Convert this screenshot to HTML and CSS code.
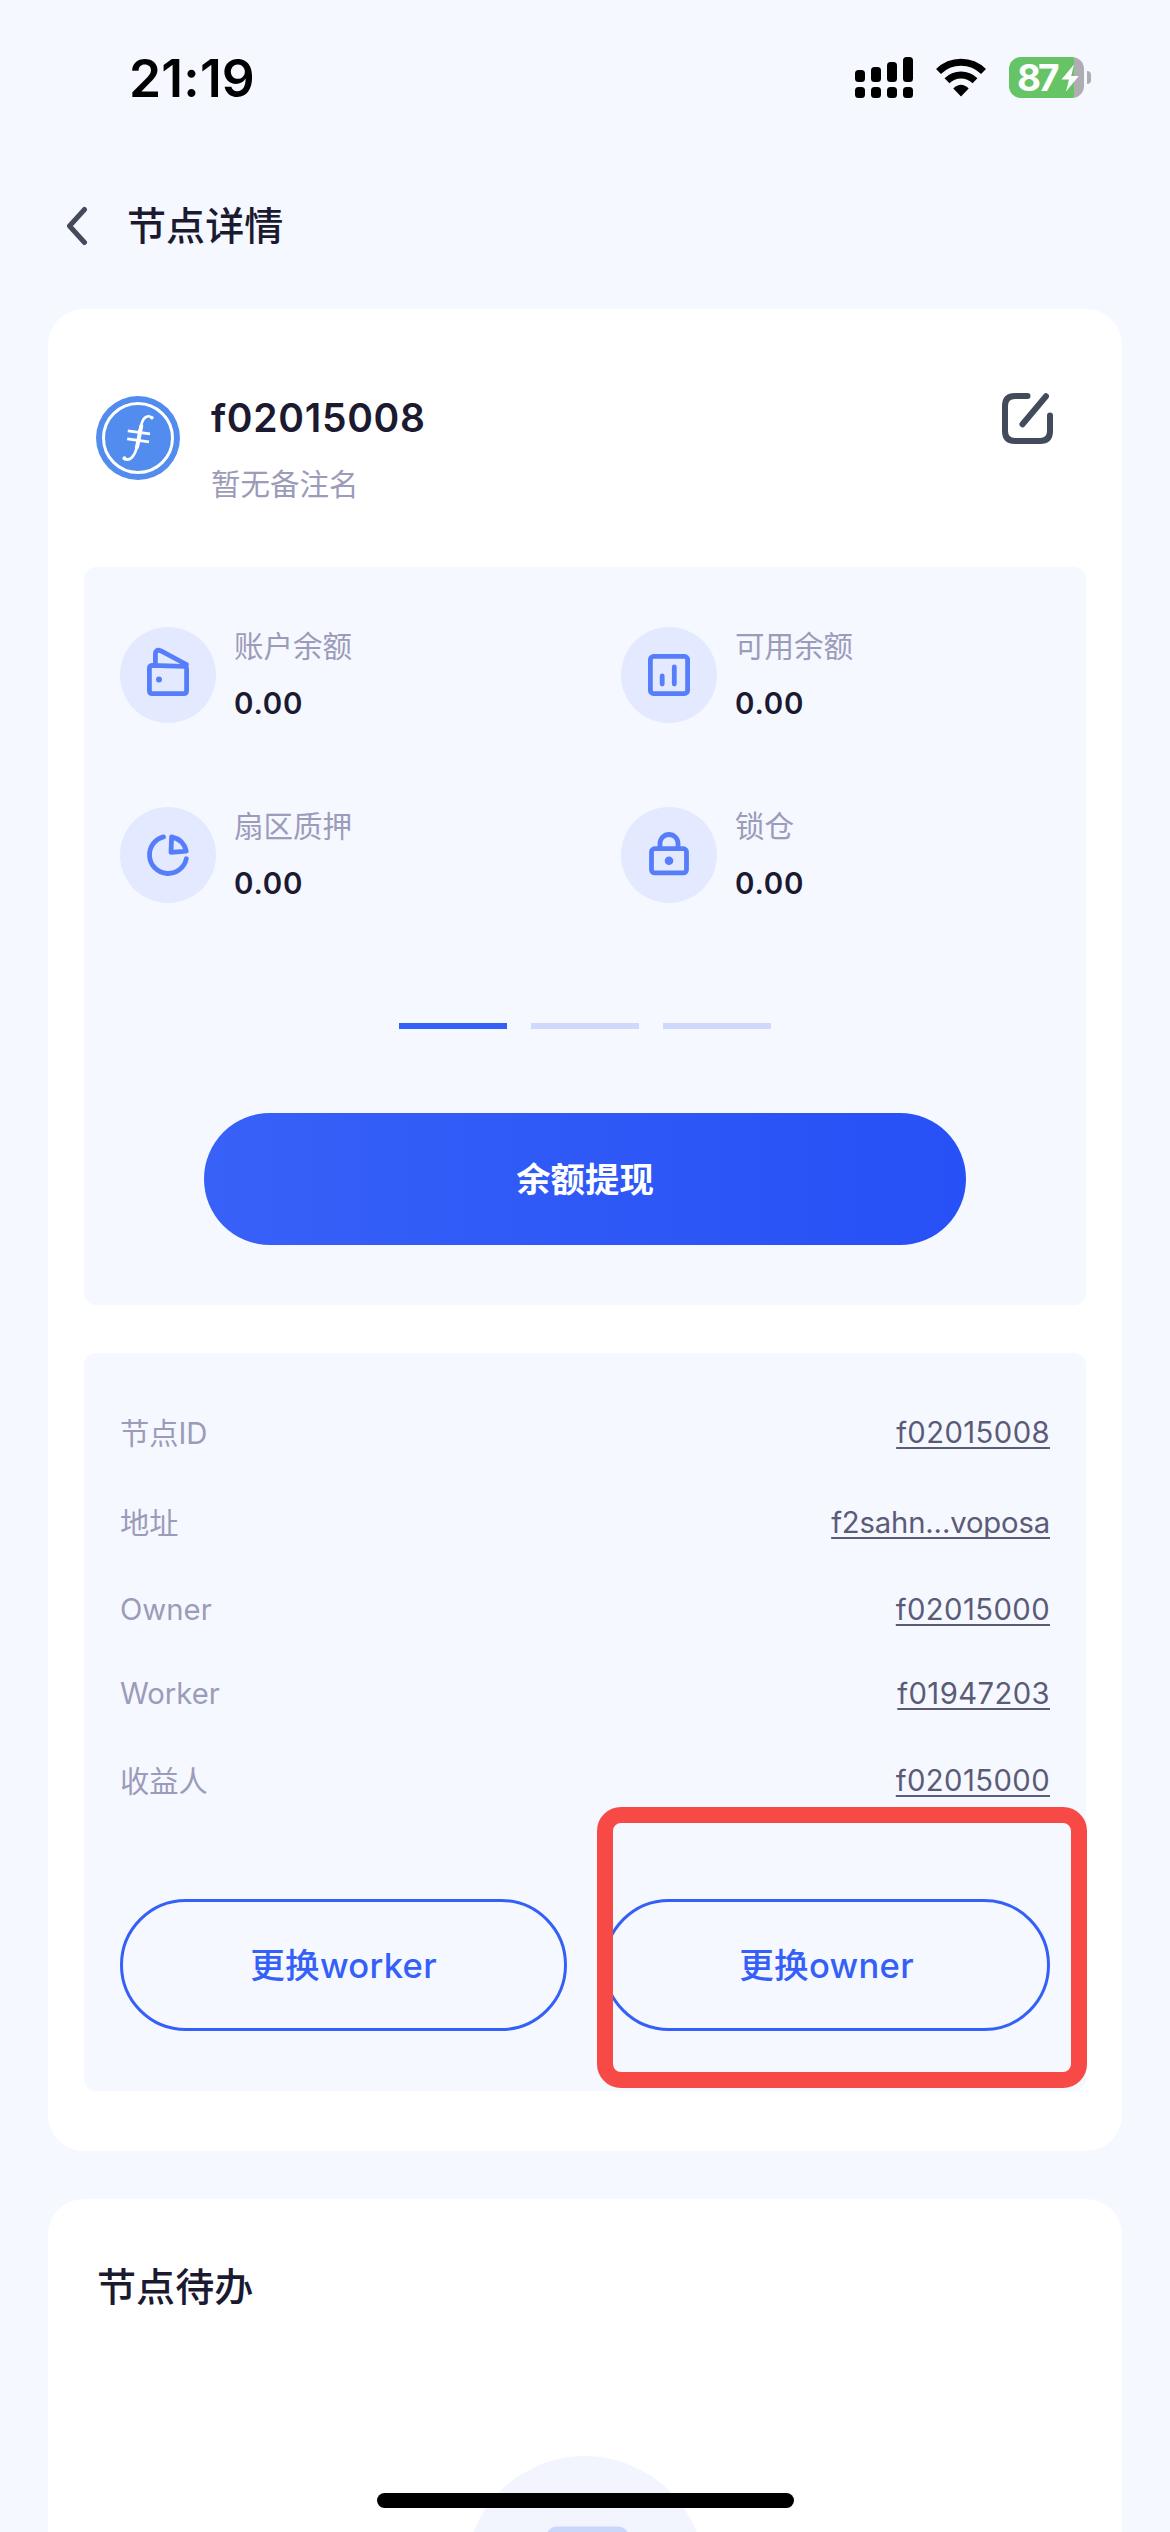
FILE: index.html
```html
<!DOCTYPE html>
<html lang="zh-CN">
<head>
<meta charset="utf-8">
<title>节点详情</title>
<link rel="stylesheet" href="styles.css">
</head>
<body>
<div class="screen">
  <header class="status">
    <span class="clock">21:19</span>
    <div class="status-icons">
      <svg class="signal" width="58" height="41" viewBox="0 0 58 41">
        <rect x="0" y="13" width="10" height="12" rx="3.5"/><rect x="16" y="10" width="10" height="15" rx="3.5"/><rect x="32" y="5" width="10" height="20" rx="3.5"/><rect x="48" y="0" width="10" height="25" rx="3.5"/>
        <rect x="0" y="30" width="10" height="11" rx="3.5"/><rect x="16" y="30" width="10" height="11" rx="3.5"/><rect x="32" y="30" width="10" height="11" rx="3.5"/><rect x="48" y="30" width="10" height="11" rx="3.5"/>
      </svg>
      <svg class="wifi" width="52" height="41" viewBox="0 0 52 41">
        <path d="M3.500 14.500A32 32 0 0 1 48.500 14.500" fill="none" stroke="#000" stroke-width="7"/>
        <path d="M12 23.800A20 20 0 0 1 40 23.800" fill="none" stroke="#000" stroke-width="7"/>
        <path d="M26 39.500L18.300 31.500Q26 24 33.700 31.500Z"/>
      </svg>
      <div class="battery">
        <div class="battery-body"><span>87</span>
          <svg width="18" height="28" viewBox="0 0 18 28"><path d="M13 0.500L0.500 15.500H8L5 27.500L17.800 12H10.200Z" fill="#fff"/></svg>
        </div>
        <div class="battery-tip"></div>
      </div>
    </div>
  </header>
  <nav class="nav">
    <svg width="24" height="40" viewBox="0 0 24 40"><path d="M19.500 3.500L4.500 20L19.500 36.500" fill="none" stroke="#434a5b" stroke-width="5" stroke-linecap="round" stroke-linejoin="round"/></svg>
    <h1>节点详情</h1>
  </nav>

  <main class="content">
    <section class="card node">
      <div class="profile">
        <svg class="coin" width="84" height="84" viewBox="0 0 84 84">
          <circle cx="42" cy="42" r="42" fill="#538cef"/>
          <circle cx="42" cy="42" r="34.500" fill="none" stroke="#fff" stroke-width="3"/>
          <g fill="none" stroke="#fff" stroke-linecap="round">
            <path d="M56 21.600C52 18.500 47.800 21 45.800 27C43 36 42.800 44 40.500 52.500C38.500 60 34 65.500 28.500 63" stroke-width="2.600"/>
            <path d="M45.300 30C43.300 38 42.800 45 40.800 51.500" stroke-width="4"/>
            <path d="M31.800 34.900L54 37.900M31.200 42.900L53 45.900" stroke-width="2.700" stroke-linecap="butt"/>
          </g>
          <circle cx="55.800" cy="21.800" r="1.800" fill="#fff"/><circle cx="28.500" cy="62.200" r="2" fill="#fff"/>
        </svg>
        <div class="names">
          <div class="node-name">f02015008</div>
          <div class="remark">暂无备注名</div>
        </div>
        <svg class="edit" width="52" height="52" viewBox="0 0 52 52"><path d="M25.500 3H13Q3 3 3 13V38Q3 48 13 48H38Q48 48 48 38V22.500M44 3.200L20.500 31.200" fill="none" stroke="#434a5b" stroke-width="6" stroke-linecap="round"/></svg>
      </div>

      <div class="panel balances">
        <div class="stats">
          <div class="stat">
            <svg class="badge" viewBox="0 0 96 96"><path d="M35.400 37V27Q35.400 22 40.500 23.700L66.500 37.500M32 38.400L64 39.400Q66.600 39.500 66.600 42V63.500Q66.600 66.600 63.500 66.600H32.500Q29.400 66.600 29.400 63.500V41.500Q29.400 38.400 32.500 38.400Z"/><circle class="dot" cx="39" cy="52.400" r="3"/></svg>
            <div class="figures"><span class="label">账户余额</span><span class="amount">0.00</span></div>
          </div>
          <div class="stat">
            <svg class="badge" viewBox="0 0 96 96"><rect x="29.400" y="29.400" width="37.200" height="37.200" rx="3.200"/><path d="M41.200 49V57M53.300 40V57"/></svg>
            <div class="figures"><span class="label">可用余额</span><span class="amount">0.00</span></div>
          </div>
          <div class="stat">
            <svg class="badge" viewBox="0 0 96 96"><path d="M43.500 29.900A18.600 18.600 0 1 0 66.300 51.800M51.600 29.900L51 45.300L66.300 44.200Q63.500 32.500 51.600 29.900Z"/></svg>
            <div class="figures"><span class="label">扇区质押</span><span class="amount">0.00</span></div>
          </div>
          <div class="stat">
            <svg class="badge" viewBox="0 0 96 96"><rect x="30.500" y="41.700" width="35" height="24.200" rx="3.200"/><path d="M39 41V36.500A9 9 0 0 1 57 36.500V41"/><circle class="dot" cx="48" cy="53.800" r="4.300"/></svg>
            <div class="figures"><span class="label">锁仓</span><span class="amount">0.00</span></div>
          </div>
        </div>
        <div class="pager"><i class="on"></i><i></i><i></i></div>
        <button class="withdraw">余额提现</button>
      </div>

      <div class="panel details">
        <dl>
          <div class="row"><dt>节点ID</dt><dd>f02015008</dd></div>
          <div class="row"><dt>地址</dt><dd class="address">f2sahn...voposa</dd></div>
          <div class="row latin"><dt>Owner</dt><dd>f02015000</dd></div>
          <div class="row latin"><dt>Worker</dt><dd>f01947203</dd></div>
          <div class="row"><dt>收益人</dt><dd>f02015000</dd></div>
        </dl>
        <div class="actions">
          <button class="outline">更换worker</button>
          <button class="outline">更换owner</button>
        </div>
        <div class="highlight"></div>
      </div>
    </section>

    <section class="card todo">
      <h2>节点待办</h2>
      <svg class="empty" width="240" height="240" viewBox="0 0 240 240"><circle cx="120" cy="120" r="120" fill="#f2f5fe"/><rect x="81.500" y="70.500" width="82" height="110" rx="10" fill="#cbd6fb"/></svg>
    </section>
  </main>
  <div class="home-bar"></div>
</div>
</body>
</html>
```
FILE: styles.css
```css
* { box-sizing: border-box; }
body { margin: 0; }
h1, h2, dl, dd { margin: 0; }
button { border: 0; padding: 0; font-family: inherit; }
svg { flex-shrink: 0; }

.screen {
  position: relative;
  width: 1170px;
  height: 2532px;
  overflow: hidden;
  background: #f5f8ff;
  color: #1b1a31;
  font-family: Inter, "Noto Sans CJK SC", sans-serif;
}

.status {
  display: flex;
  justify-content: space-between;
  align-items: center;
  height: 155px;
  padding: 0 79px 0 129px;
  color: #000;
}
.clock { font-size: 51.500px; font-weight: 600; letter-spacing: 0.200px; }
.status-icons { display: flex; align-items: center; }
.wifi { margin: 0 22px; }
.battery { display: flex; align-items: center; gap: 3px; }
.battery-body {
  display: flex;
  align-items: center;
  gap: 4px;
  width: 75px;
  height: 41px;
  padding-left: 8px;
  border-radius: 12px;
  background: linear-gradient(90deg, #67c466 65px, #aeaeb2 65px);
  color: #fff;
  font-size: 37px;
  font-weight: 700;
  letter-spacing: -3px;
}
.battery-tip { width: 4px; height: 13px; border-radius: 0 4px 4px 0; background: #aeaeb2; }

.nav { display: flex; align-items: center; gap: 38px; height: 142px; padding-left: 65px; margin-bottom: 12px; }
.nav h1, .todo h2 { font-size: 39.100px; font-weight: 500; line-height: 56px; }

.content { display: flex; flex-direction: column; gap: 48px; padding: 0 48px; }
.card { border-radius: 36px; background: #fff; }

.node { height: 1842px; padding: 0 36px; }
.profile { display: flex; height: 258px; padding: 84px 32px 0 12px; }
.coin { margin-top: 3px; }
.names { flex: 1; margin: 1px 0 0 31px; }
.node-name { font-size: 39px; font-weight: 600; line-height: 48px; letter-spacing: 0.700px; }
.remark { margin-top: 21px; color: #9c9bb9; font-size: 29.500px; line-height: 42px; }

.panel { position: relative; border-radius: 12px; background: #f5f8ff; }
.balances { display: flex; flex-direction: column; align-items: center; height: 738px; padding-top: 60px; }
.stats { display: grid; grid-template-columns: 501px 501px; row-gap: 84px; width: 1002px; padding-left: 36px; }
.stat { display: flex; height: 96px; }
.badge {
  width: 96px;
  height: 96px;
  border-radius: 50%;
  background: #e3e9fe;
  fill: none;
  stroke: #567efb;
  stroke-width: 4.800px;
  stroke-linecap: round;
  stroke-linejoin: round;
}
.badge .dot { fill: #567efb; stroke: none; }
.figures { display: flex; flex-direction: column; margin-left: 18px; }
.label { color: #9c9bb9; font-size: 29.500px; line-height: 39px; }
.amount { margin-top: 18px; font-size: 29.500px; font-weight: 600; line-height: 39px; letter-spacing: 0.800px; }

.pager { display: flex; gap: 24px; margin: 120px 0 84px; }
.pager i { width: 108px; height: 6px; background: #ced9fb; }
.pager .on { background: #3560f7; }
.withdraw {
  width: 762px;
  height: 132px;
  padding-bottom: 5px;
  border-radius: 66px;
  background: linear-gradient(90deg, #3761f7, #2750f6);
  color: #fff;
  font-size: 34.400px;
  font-weight: 700;
}

.details { height: 738px; margin-top: 48px; padding: 58px 36px 0; }
dl { display: flex; flex-direction: column; gap: 48px; }
.row { display: flex; justify-content: space-between; align-items: center; height: 42px; font-size: 29.250px; }
.row.latin { height: 36px; }
dt { padding-bottom: 3px; color: #9c9bb9; }
.latin dt { padding-bottom: 0; }
dd { color: #5c5b77; text-decoration: underline; text-decoration-thickness: 2px; text-underline-offset: 4px; letter-spacing: 0.400px; }
.address { letter-spacing: -0.150px; text-decoration-skip-ink: none; }
.actions { display: flex; gap: 36px; margin-top: 98px; }
.outline {
  flex: 1;
  height: 132px;
  padding-bottom: 5px;
  border: 3px solid #3560f7;
  border-radius: 66px;
  background: none;
  color: #3560f7;
  font-size: 34.600px;
  font-weight: 500;
  letter-spacing: 0.300px;
}
.highlight {
  position: absolute;
  top: 454px;
  right: -1px;
  width: 490px;
  height: 281px;
  border: 16px solid #f74a46;
  border-radius: 24px;
}

.todo { display: flex; flex-direction: column; height: 480px; padding: 60px 49px 0; }
.empty { align-self: center; margin-top: 141px; }
.home-bar { position: absolute; left: 377px; bottom: 24px; width: 417px; height: 15px; border-radius: 8px; background: #000; }
```
